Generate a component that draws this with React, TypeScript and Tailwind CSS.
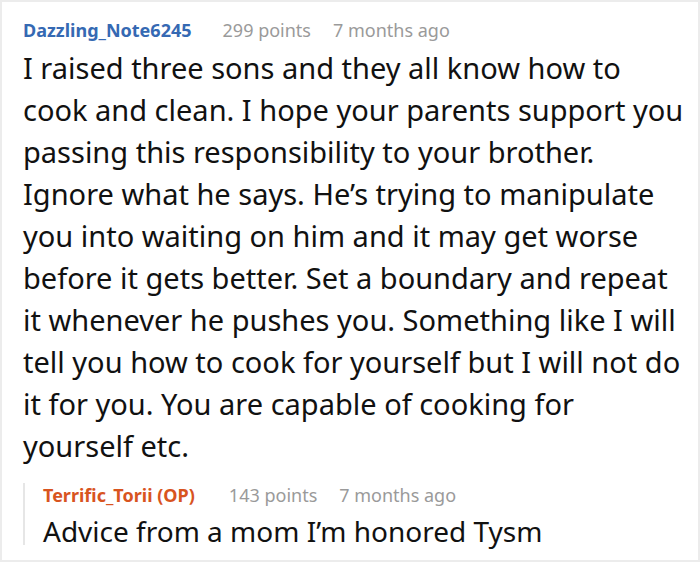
import React from "react";

export default function App() {
  return (
    <div
      className="w-[700px] h-[562px] bg-white border-2 border-[#ececec] box-border overflow-hidden"
      style={{ fontFamily: '"Noto Sans", "Open Sans", sans-serif' }}
    >
      <div className="pl-[21px] pr-[14px] pt-[16px]">
        <div className="flex items-baseline h-[24px] leading-[24px]">
          <span className="text-[18px] font-bold text-[#3569b3]">Dazzling_Note6245</span>
          <span className="ml-[31px] text-[18px] text-[#9a9a9a]">299 points</span>
          <span className="ml-[22px] text-[18px] text-[#9a9a9a]">7 months ago</span>
        </div>
        <p className="mt-[5px] text-[29px] leading-[42px] text-[#111]">
          I raised three sons and they all know how to cook and clean. I hope your parents support you passing this
          responsibility to your brother. Ignore what he says. He’s trying to manipulate you into waiting on him and it
          may get worse before it gets better. Set a boundary and repeat it whenever he pushes you. Something like I
          will tell you how to cook for yourself but I will not do it for you. You are capable of cooking for yourself
          etc.
        </p>
        <div className="mt-[27px] border-l-2 border-[#e6e6e6] pl-[18px]">
          <div className="flex items-baseline h-[24px] leading-[24px] -mt-[11px]">
            <span className="text-[18px] font-bold text-[#d8541f]">Terrific_Torii (OP)</span>
            <span className="ml-[34px] text-[18px] text-[#9a9a9a]">143 points</span>
            <span className="ml-[22px] text-[18px] text-[#9a9a9a]">7 months ago</span>
          </div>
          <p className="mt-[10px] text-[28px] leading-[28px] text-[#111]">Advice from a mom I’m honored Tysm</p>
        </div>
      </div>
    </div>
  );
}
